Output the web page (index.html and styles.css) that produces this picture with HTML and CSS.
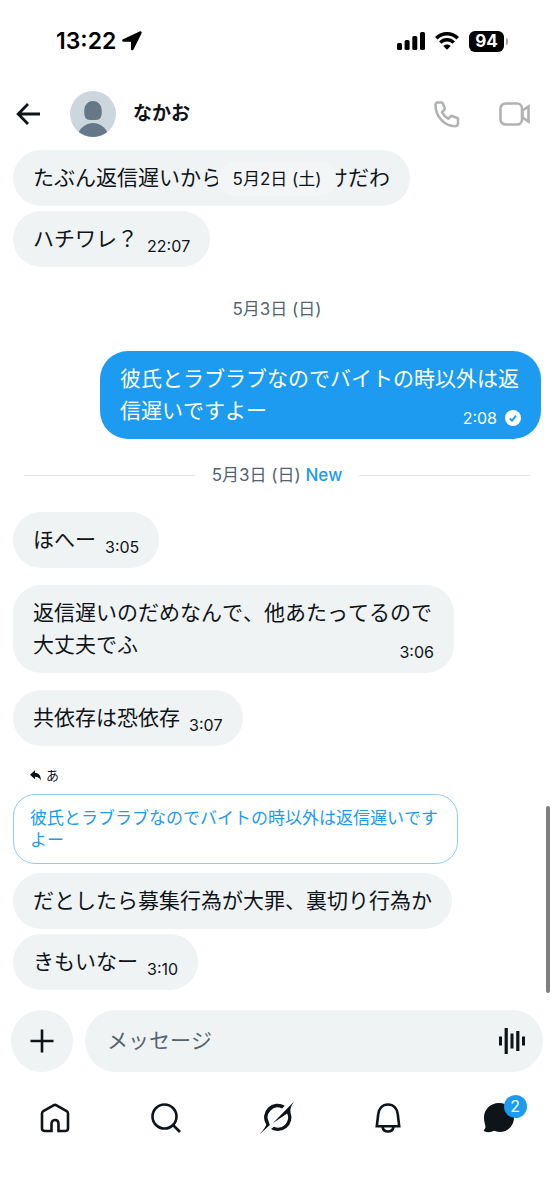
FILE: index.html
```html
<!DOCTYPE html>
<html lang="ja">
<head>
<meta charset="utf-8">
<meta name="viewport" content="width=device-width, initial-scale=1">
<title>なかお</title>
<link rel="stylesheet" href="styles.css">
</head>
<body>
<div class="app">
  <div class="status">
    <div class="status-side">
      <span class="clock">13:22</span>
      <svg width="20" height="20" viewBox="0 0 20 20" aria-hidden="true"><path d="M17.600.5 1 8.200c-1.300.6-1.100 2.500.4 2.500h7c.4 0 .6.2.6.6v6.600c0 1.600 1.900 1.900 2.500.5L19.600 2.300c.5-1.300-.7-2.400-2-1.800z" fill="#000"/></svg>
    </div>
    <div class="status-side status-right">
      <svg width="28" height="20" viewBox="0 0 28 20" aria-hidden="true"><rect x="0" y="12" width="5" height="7" rx="1.500"/><rect x="7.600" y="9" width="5" height="10" rx="1.500"/><rect x="15.300" y="5" width="5" height="14" rx="1.500"/><rect x="23" y="1" width="5" height="18" rx="1.500"/></svg>
      <svg width="24" height="20" viewBox="0 0 24 20" fill="none" stroke="#000" stroke-width="3.400" aria-hidden="true"><path d="M1.300 7.300C7.200 1.200 16.800 1.200 22.700 7.300M5.300 11.600c3.700-3.800 9.700-3.800 13.400 0"/><path d="M12 18.800 8.300 15c2-2 5.400-2 7.400 0z" fill="#000" stroke="none"/></svg>
      <span class="battery">94</span>
    </div>
  </div>

  <header class="header">
    <button class="icon-button" aria-label="戻る"><svg width="24" height="24" viewBox="0 0 24 24" fill="none" stroke="#0f1419" stroke-width="2.800"><path d="M24 12H2.500M12 2 2.200 12 12 22"/></svg></button>
    <svg class="avatar" width="46" height="46" viewBox="0 0 46 46" aria-hidden="true"><defs><clipPath id="face"><circle cx="23" cy="23" r="23"/></clipPath></defs><g clip-path="url(#face)"><path d="M0 0h46v46H0z" fill="#ccd6dd"/><path d="M23 10c-5.500 0-8.800 4.300-8.800 10.500 0 5.700 1.800 8.500 5.800 8.500h6c4 0 5.800-2.800 5.800-8.500C31.800 14.300 28.500 10 23 10z" fill="#667788"/><path d="M8 43c2.500-7 8.500-11 15-11s12.500 4 15 11v5H8z" fill="#667788"/></g></svg>
    <h1 class="name">なかお</h1>
    <button class="icon-button call" aria-label="音声通話"><svg width="26" height="27" viewBox="0 0 26 27" fill="none" stroke="#b0b2b3" stroke-width="2.600" stroke-linejoin="round"><path d="M3 1.500h4.700c.5 0 .8.200 1 .7l2 4.800c.2.500.1.900-.2 1.300L8 11.300c1.400 2.900 3.300 4.900 6.200 6.400l2.700-2.500c.4-.3.800-.4 1.300-.2l5 2c.5.200.8.500.8 1v4.300c0 1.900-1.100 2.900-3 2.900C10.500 25.200 1.500 15.500 1.500 4c0-1.200.4-2 1.500-2.500z"/></svg></button>
    <button class="icon-button" aria-label="ビデオ通話"><svg width="32" height="24" viewBox="0 0 32 24" fill="none" stroke="#b0b2b3" stroke-width="2.600"><rect x="1.500" y="1.500" width="21.500" height="21" rx="5"/><path d="M23.500 8.500 29.500 4.500v15l-6-4z"/></svg></button>
  </header>

  <main class="chat">
    <div class="message first">
      <p class="bubble">たぶん返信遅いから<span class="covered"></span>けだわ</p>
      <time class="floating-date">5月2日 (土)</time>
    </div>
    <div class="message grouped"><p class="bubble">ハチワレ？<time class="time">22:07</time></p></div>

    <div class="day"><time>5月3日 (日)</time></div>

    <div class="message sent"><p class="bubble">彼氏とラブラブなのでバイトの時以外は返信遅いですよー<span class="time">2:08<svg width="16" height="16" viewBox="0 0 16 16" aria-label="既読"><circle cx="8" cy="8" r="8" fill="#fff"/><path d="m4.800 8.500 2.200 2.100 4-5" fill="none" stroke="#1d9bf0" stroke-width="1.800"/></svg></span></p></div>

    <div class="day unread"><span><time>5月3日 (日)</time> <b>New</b></span></div>

    <div class="message first"><p class="bubble">ほへー<time class="time">3:05</time></p></div>
    <div class="message"><p class="bubble">返信遅いのだめなんで、他あたってるので大丈夫でふ<time class="time">3:06</time></p></div>
    <div class="message"><p class="bubble">共依存は恐依存<time class="time">3:07</time></p></div>

    <div class="reply-to"><svg width="11" height="11" viewBox="0 0 11 11" aria-hidden="true"><path d="M0 4.700 5 .3v2.500c3.700.2 5.800 2.600 6 7.700C9.500 8 8 6.800 5 6.800v2.500z" fill="#0f1419"/></svg>あ</div>
    <blockquote class="quote">彼氏とラブラブなのでバイトの時以外は返信遅いですよー</blockquote>
    <div class="message first"><p class="bubble">だとしたら募集行為が大罪、裏切り行為か</p></div>
    <div class="message grouped"><p class="bubble">きもいなー<time class="time">3:10</time></p></div>
    <div class="scroll-thumb"></div>
  </main>

  <form class="composer">
    <button class="plus" type="button" aria-label="追加"><svg width="24" height="24" viewBox="0 0 24 24" stroke="#0f1419" stroke-width="2.600"><path d="M12 .5v23M.5 12h23"/></svg></button>
    <div class="field">
      <input type="text" placeholder="メッセージ" aria-label="メッセージ">
      <button class="icon-button" type="button" aria-label="音声メッセージ"><svg width="27" height="26" viewBox="0 0 27 26" fill="#0f1419"><rect x="0" y="8.500" width="3" height="9"/><rect x="5.600" y="0" width="3.200" height="26"/><rect x="11.500" y="5.500" width="3" height="15"/><rect x="17.200" y="3" width="3.200" height="20"/><rect x="23" y="8.500" width="3" height="9"/></svg></button>
    </div>
  </form>

  <nav class="tabs">
    <a href="#" aria-label="ホーム"><svg width="30" height="30" viewBox="0 0 30 30" fill="none" stroke="#0f1419" stroke-width="2.600"><path d="M11.500 28H4.800C3 28 2 27 2 25.200V10.500c0-1.100.4-1.800 1.300-2.300L13.500 2.300c1-.6 2-.6 3 0l10.200 5.900c.9.500 1.300 1.200 1.300 2.300v14.700c0 1.800-1 2.800-2.800 2.800h-6.700v-7c0-2.500-1.200-4-3.500-4s-3.500 1.500-3.500 4z"/></svg></a>
    <a href="#" aria-label="検索"><svg width="30" height="30" viewBox="0 0 30 30" fill="none" stroke="#0f1419" stroke-width="2.600"><circle cx="13.500" cy="13.500" r="12"/><path d="m22 22 7 7"/></svg></a>
    <a href="#" aria-label="Grok"><svg width="36" height="34" viewBox="0 0 36 34" fill="#0f1419"><path d="M.5 33.500Q7 26 7.200 23.500A13.500 13.500 0 0 1 25.800 4.800L23.200 7.500A10 10 0 0 0 9.800 21L10.800 24z"/><path d="M35 .5 14 22 28.200 12.600A10 10 0 0 1 15 25.700L12 28A13.500 13.500 0 0 0 31.500 11.500Q30.500 7 35 .5z"/></svg></a>
    <a href="#" aria-label="通知"><svg width="30" height="30" viewBox="0 0 30 30" fill="none" stroke="#0f1419" stroke-width="2.600"><path d="M3.800 23.200 5.200 11.500C5.900 5.500 9.500 1.500 15 1.500s9.100 4 9.800 10l1.400 11.700zM9.500 24c.5 3 2.700 4.500 5.500 4.500s5-1.500 5.500-4.500"/></svg></a>
    <a href="#" aria-label="メッセージ"><span class="chat-tab"><svg width="32" height="30" viewBox="0 0 32 30" fill="#0f1419"><path d="M16 0c8.700 0 15 6.500 15 14.500S25 29 16.500 29c-2.200 0-3.600-.5-5.200-1.200-3 1.500-6.800 1.800-9.600.7-.9-.4-1-1.100-.4-1.900 1.500-1.800 1.400-3 .7-5.200C1.300 19.300 1 17 1 14.500 1 6.500 7.300 0 16 0z"/></svg><span class="badge">2</span></span></a>
  </nav>
</div>
</body>
</html>
```

FILE: styles.css
```css
* {
  box-sizing: border-box;
}

body {
  margin: 0;
  background: #fff;
  color: #0f1419;
  font-family: "Inter", "Noto Sans CJK JP", sans-serif;
  font-kerning: none;
}

button {
  border: 0;
  padding: 0;
  background: none;
  font: inherit;
}

svg {
  display: block;
  flex: none;
}

.app {
  display: flex;
  flex-direction: column;
  min-height: 100vh;
}

.status {
  display: flex;
  justify-content: space-between;
  padding: 25px 46px 0 56px;
  height: 82px;
  align-items: flex-start;
  color: #000;
}

.status-side {
  display: flex;
  align-items: center;
  gap: 6px;
  height: 32px;
}

.status-right {
  gap: 10px;
}

.clock {
  font-size: 23px;
  font-weight: 600;
  line-height: 32px;
}

.battery {
  position: relative;
  width: 35px;
  margin-right: 4px;
  border-radius: 6px;
  background: #000;
  color: #fff;
  font-size: 17px;
  font-weight: 700;
  line-height: 21px;
  text-align: center;
}

.battery::after {
  content: "";
  position: absolute;
  right: -4px;
  top: 7px;
  width: 2px;
  height: 7px;
  border-radius: 0 2px 2px 0;
  background: #a8a8a8;
}

.header {
  display: flex;
  align-items: center;
  height: 64px;
  padding: 0 23px 0 16px;
}

.avatar {
  margin: 0 17px 0 30px;
}

.name {
  flex: 1;
  margin: 0;
  font-size: 19px;
  font-weight: 700;
  line-height: 28px;
}

.call {
  margin-right: 39px;
}

.chat {
  position: relative;
  padding: 4px 13px 0;
}

.message {
  position: relative;
  display: flex;
  margin-top: 17px;
}

.message.first {
  margin-top: 0;
}

.message.grouped {
  margin-top: 5px;
}

.message.sent {
  justify-content: flex-end;
}

.bubble {
  max-width: 441px;
  margin: 0;
  padding: 12px 20px;
  border-radius: 28px;
  background: #eff3f4;
  font-size: 21px;
  line-height: 32px;
}

.sent .bubble {
  background: #1d9bf0;
  color: #fff;
}

.covered {
  display: inline-block;
  width: 5em;
}

.time {
  float: right;
  display: flex;
  align-items: center;
  gap: 8px;
  margin: 14px 0 0 9px;
  font-size: 16px;
  line-height: 18px;
}

.floating-date {
  position: absolute;
  top: 12px;
  left: 50%;
  transform: translateX(-50%);
  padding: 0 15px;
  border-radius: 17px;
  background: #f3f5f6;
  font-size: 17px;
  line-height: 34px;
  white-space: nowrap;
}

.day {
  display: flex;
  justify-content: center;
  margin: 30px 0;
  color: #536471;
  font-size: 17px;
  line-height: 24px;
}

.day.unread {
  align-items: center;
  gap: 17px;
  margin: 24px 11px 25px;
}

.unread::before,
.unread::after {
  content: "";
  flex: 1;
  height: 1px;
  background: #e1e5e7;
}

.unread b {
  color: #1d9bf0;
  font-weight: 500;
}

.reply-to {
  display: flex;
  align-items: center;
  gap: 5px;
  margin: 17px 0 7px 17px;
  font-size: 13px;
  line-height: 24px;
}

.quote {
  max-width: 445px;
  margin: 0 0 9px;
  padding: 12px 16px;
  border: 1px solid #8ecdf7;
  border-radius: 22px;
  color: #1d9bf0;
  font-size: 17px;
  line-height: 22px;
}

.scroll-thumb {
  position: absolute;
  right: 4px;
  bottom: -3px;
  width: 4px;
  height: 187px;
  border-radius: 2px;
  background: #7f7f7f;
}

.composer {
  display: flex;
  gap: 12px;
  padding: 20px 11px 0;
}

.plus {
  display: flex;
  flex: none;
  align-items: center;
  justify-content: center;
  width: 62px;
  height: 62px;
  border-radius: 50%;
  background: #eff3f4;
}

.field {
  display: flex;
  flex: 1;
  align-items: center;
  padding: 0 17px 0 22px;
  border-radius: 31px;
  background: #eff3f4;
}

.field input {
  flex: 1;
  min-width: 0;
  border: 0;
  padding: 0;
  outline: 0;
  background: none;
  color: #0f1419;
  font: inherit;
  font-size: 21px;
  line-height: 32px;
}

.field input::placeholder {
  color: #536471;
  opacity: 1;
}

.tabs {
  display: grid;
  grid-template-columns: repeat(5, 1fr);
  height: 92px;
}

.tabs a {
  display: flex;
  align-items: center;
  justify-content: center;
  text-decoration: none;
}

.chat-tab {
  position: relative;
}

.badge {
  position: absolute;
  top: -8px;
  right: -12px;
  width: 23px;
  border-radius: 50%;
  background: #1d9bf0;
  color: #fff;
  font-size: 16px;
  line-height: 23px;
  text-align: center;
}
```
